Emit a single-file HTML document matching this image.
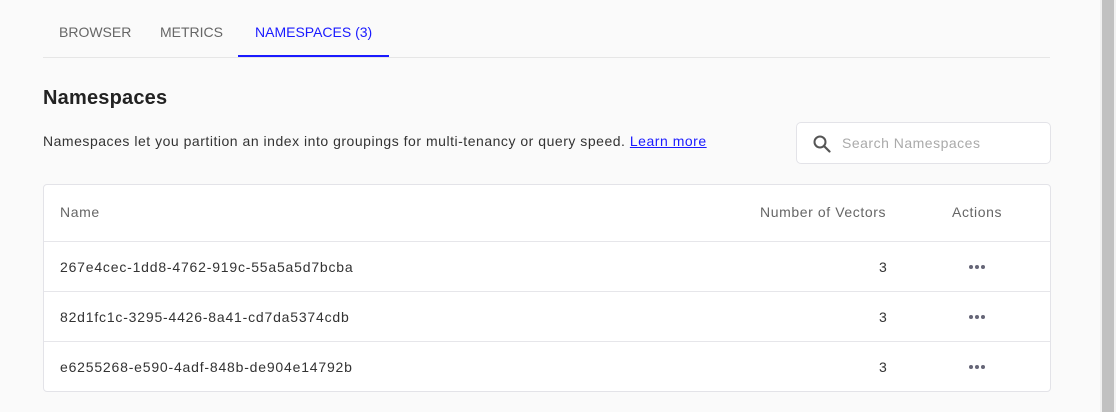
<!DOCTYPE html>
<html><head><style>
*{box-sizing:border-box;margin:0;padding:0}
body{width:1116px;height:412px;background:#fafafa;font-family:"Liberation Sans",sans-serif;position:relative;overflow:hidden;color:#222}
.sb{position:absolute;left:1100px;top:0;width:16px;height:412px;background:#f1f1f1}
.sb div{position:absolute;left:2px;top:0;width:12px;height:412px;background:#c1c1c1}
.tab{position:absolute;top:24px;font-size:14px;color:#666}
.line{position:absolute;left:43px;top:57px;width:1007px;height:1px;background:#e6e6e6}
.ul{position:absolute;left:238px;top:55px;width:151px;height:2px;background:#1a1aff}
h2{position:absolute;left:43px;top:87px;font-size:20px;font-weight:bold;color:#222;letter-spacing:.2px}
.desc{position:absolute;left:43px;top:133px;font-size:14px;color:#333;letter-spacing:.52px}
.desc a{color:#1a1aff;text-decoration:underline}
.search{position:absolute;left:796px;top:122px;width:255px;height:42px;border:1px solid #e3e3e8;border-radius:5px;background:#fff}
.search span{position:absolute;left:45px;top:12px;font-size:14px;color:#aaa;letter-spacing:.5px}
.tbl{position:absolute;left:43px;top:184px;width:1008px;height:208px;border:1px solid #e3e3e8;border-radius:4px;background:#fff}
.row{position:absolute;left:0;width:1006px;border-top:1px solid #e6e6ea;height:50px}
.c{position:absolute;font-size:14px;color:#333}
.id{letter-spacing:.8px}
.h{color:#666;letter-spacing:.6px}
.dots{position:absolute;left:925px;top:23px;width:18px;height:4px}
.dots i{position:absolute;top:0;width:4px;height:4px;border-radius:50%;background:#667}
</style></head><body>
<div class="tab" style="left:59px">BROWSER</div>
<div class="tab" style="left:160px">METRICS</div>
<div class="tab" style="left:255px;color:#1a1aff">NAMESPACES (3)</div>
<div class="line"></div><div class="ul"></div>
<h2>Namespaces</h2>
<div class="desc">Namespaces let you partition an index into groupings for multi-tenancy or query speed. <a>Learn more</a></div>
<div class="search"><svg style="position:absolute;left:16px;top:12px" width="18" height="18" viewBox="0 0 18 18"><circle cx="7" cy="7" r="5.5" fill="none" stroke="#555" stroke-width="2"/><line x1="11" y1="11" x2="16.5" y2="16.5" stroke="#555" stroke-width="2.2" stroke-linecap="round"/></svg><span>Search Namespaces</span></div>
<div class="tbl">
<div class="c h" style="left:16px;top:19px">Name</div>
<div class="c h" style="left:716px;top:19px">Number of Vectors</div>
<div class="c h" style="left:908px;top:19px">Actions</div>
<div class="row" style="top:56px"><div class="c id" style="left:16px;top:17px">267e4cec-1dd8-4762-919c-55a5a5d7bcba</div><div class="c" style="left:835px;top:17px">3</div><div class="dots"><i style="left:0"></i><i style="left:6px"></i><i style="left:12px"></i></div></div>
<div class="row" style="top:106px"><div class="c id" style="left:16px;top:17px">82d1fc1c-3295-4426-8a41-cd7da5374cdb</div><div class="c" style="left:835px;top:17px">3</div><div class="dots"><i style="left:0"></i><i style="left:6px"></i><i style="left:12px"></i></div></div>
<div class="row" style="top:156px"><div class="c id" style="left:16px;top:17px">e6255268-e590-4adf-848b-de904e14792b</div><div class="c" style="left:835px;top:17px">3</div><div class="dots"><i style="left:0"></i><i style="left:6px"></i><i style="left:12px"></i></div></div>
</div>
<div class="sb"><div></div></div>
</body></html>
